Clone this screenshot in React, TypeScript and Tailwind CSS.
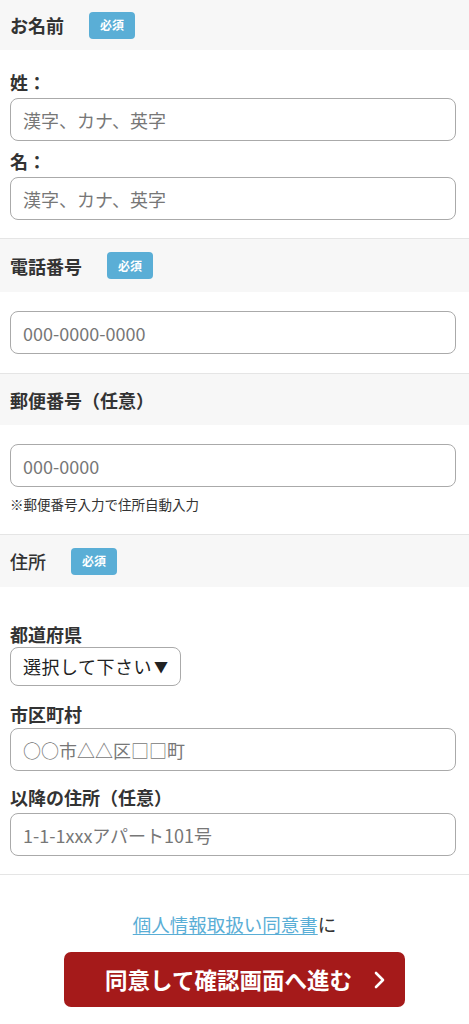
import React from "react";

const font = { fontFamily: '"Noto Sans CJK JP", "Noto Sans", sans-serif' };

function Badge() {
  return (
    <span className="ml-[25px] inline-flex h-[27px] w-[46px] items-center justify-center rounded-[4px] bg-[#5aaed6] text-[12px] font-bold text-white">
      必須
    </span>
  );
}

function SectionHeader({ title, required, bold = true, h = "h-[53px]" }: { title: string; required?: boolean; bold?: boolean; h?: string }) {
  return (
    <div className={`flex items-center bg-[#f7f7f7] px-[10px] ${h}`}>
      <span className={`text-[18px] leading-[24px] text-[#333] ${bold ? "font-bold" : "font-medium"}`}>{title}</span>
      {required && <Badge />}
    </div>
  );
}

function TextInput({ placeholder }: { placeholder: string }) {
  return (
    <input
      type="text"
      placeholder={placeholder}
      className="block h-[43px] w-full rounded-[8px] border border-[#aaaaaa] bg-white px-[12px] text-[18px] text-[#333] outline-none placeholder:text-[#777]"
      style={font}
    />
  );
}

function FieldLabel({ children }: { children: React.ReactNode }) {
  return <div className="text-[18px] font-bold leading-[24px] text-[#333]">{children}</div>;
}

export default function App() {
  return (
    <div className="min-h-screen bg-white text-[#333]" style={font}>
      {/* お名前 */}
      <SectionHeader title="お名前" required h="h-[50px]" />
      <div className="pl-[10px] pr-[13px] pt-[20px] pb-[18px]">
        <FieldLabel>姓：</FieldLabel>
        <div className="mt-[4px]">
          <TextInput placeholder="漢字、カナ、英字" />
        </div>
        <div className="mt-[8px]">
          <FieldLabel>名：</FieldLabel>
        </div>
        <div className="mt-[4px]">
          <TextInput placeholder="漢字、カナ、英字" />
        </div>
      </div>

      {/* 電話番号 */}
      <div className="border-t border-[#e5e5e5]">
        <SectionHeader title="電話番号" required />
      </div>
      <div className="pl-[10px] pr-[13px] pt-[19px] pb-[19px]">
        <TextInput placeholder="000-0000-0000" />
      </div>

      {/* 郵便番号 */}
      <div className="border-t border-[#e5e5e5]">
        <SectionHeader title="郵便番号（任意）" h="h-[51px]" />
      </div>
      <div className="pl-[10px] pr-[13px] pt-[19px] pb-[20px]">
        <TextInput placeholder="000-0000" />
        <p className="mt-[7px] text-[13.5px] leading-[20px] text-[#333]">※郵便番号入力で住所自動入力</p>
      </div>

      {/* 住所 */}
      <div className="border-t border-[#e5e5e5]">
        <SectionHeader title="住所" required bold={false} h="h-[52px]" />
      </div>
      <div className="pl-[10px] pr-[13px] pt-[35px] pb-[18px]">
        <FieldLabel>都道府県</FieldLabel>
        <div className="mt-[1px] inline-flex h-[39px] items-center whitespace-nowrap rounded-[8px] border border-[#aaaaaa] bg-white pl-[12px] pr-[12px] text-[18px] tracking-[0.5px] text-[#222]">
          選択して下さい<span className="ml-[2px] text-[14px]">▼</span>
        </div>
        <div className="mt-[16px]">
          <FieldLabel>市区町村</FieldLabel>
        </div>
        <div className="mt-[2px]">
          <TextInput placeholder="○○市△△区□□町" />
        </div>
        <div className="mt-[14px]">
          <FieldLabel>以降の住所（任意）</FieldLabel>
        </div>
        <div className="mt-[4px]">
          <TextInput placeholder="1-1-1xxxアパート101号" />
        </div>
      </div>

      {/* 同意 */}
      <div className="border-t border-[#e5e5e5] pt-[36px] pb-[20px]">
        <p className="text-center text-[18.5px] leading-[26px]">
          <a href="#" className="text-[#5aaed6] underline underline-offset-2">個人情報取扱い同意書</a>
          <span className="text-[#333]">に</span>
        </p>
        <div className="mt-[15px] flex justify-center">
          <button className="flex h-[55px] w-[341px] items-center justify-center gap-[22px] rounded-[7px] bg-[#a51a1a] pl-[22px] text-[22.5px] font-bold text-white">
            同意して確認画面へ進む
            <svg width="12" height="20" viewBox="0 0 12 20" fill="none">
              <polyline points="2,3 9,10 2,17" stroke="white" strokeWidth="2.6" strokeLinecap="round" strokeLinejoin="round" />
            </svg>
          </button>
        </div>
      </div>
    </div>
  );
}
